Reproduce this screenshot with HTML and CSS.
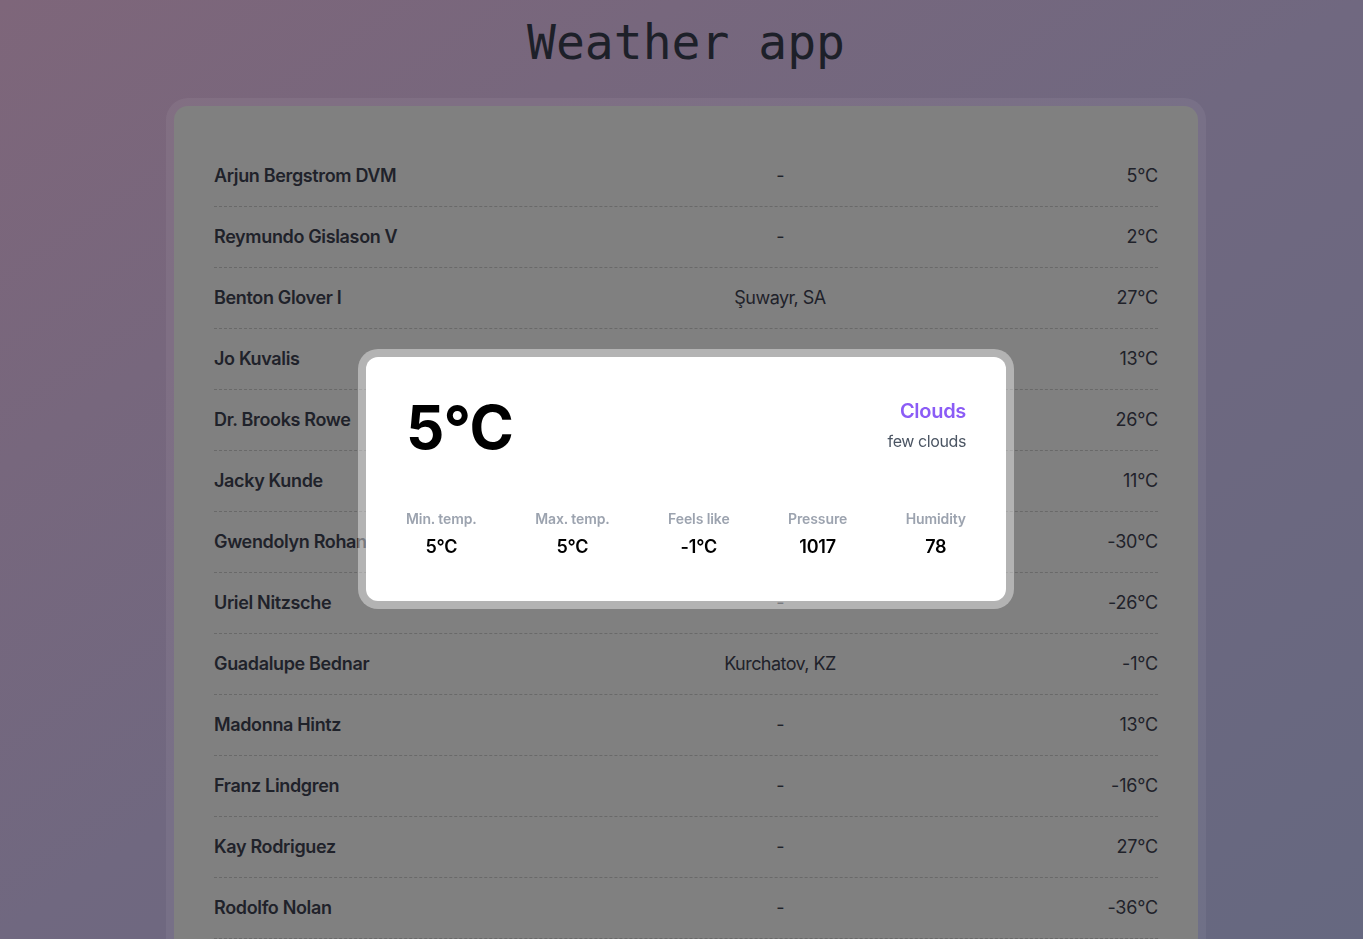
FILE: index.html
```html
<!DOCTYPE html>
<html lang="en">
<head>
<meta charset="utf-8">
<title>Weather app</title>
<link rel="stylesheet" href="styles.css">
</head>
<body>
<div class="page">
  <h1 class="title">Weather app</h1>
  <div class="card">
    <div class="row"><span class="name">Arjun Bergstrom DVM</span><span class="loc">-</span><span class="temp">5°C</span></div>
    <div class="row"><span class="name">Reymundo Gislason V</span><span class="loc">-</span><span class="temp">2°C</span></div>
    <div class="row"><span class="name">Benton Glover I</span><span class="loc">Şuwayr, SA</span><span class="temp">27°C</span></div>
    <div class="row"><span class="name">Jo Kuvalis</span><span class="loc">-</span><span class="temp">13°C</span></div>
    <div class="row"><span class="name">Dr. Brooks Rowe</span><span class="loc">-</span><span class="temp">26°C</span></div>
    <div class="row"><span class="name">Jacky Kunde</span><span class="loc">-</span><span class="temp">11°C</span></div>
    <div class="row"><span class="name">Gwendolyn Rohan</span><span class="loc">-</span><span class="temp">-30°C</span></div>
    <div class="row"><span class="name">Uriel Nitzsche</span><span class="loc">-</span><span class="temp">-26°C</span></div>
    <div class="row"><span class="name">Guadalupe Bednar</span><span class="loc">Kurchatov, KZ</span><span class="temp">-1°C</span></div>
    <div class="row"><span class="name">Madonna Hintz</span><span class="loc">-</span><span class="temp">13°C</span></div>
    <div class="row"><span class="name">Franz Lindgren</span><span class="loc">-</span><span class="temp">-16°C</span></div>
    <div class="row"><span class="name">Kay Rodriguez</span><span class="loc">-</span><span class="temp">27°C</span></div>
    <div class="row"><span class="name">Rodolfo Nolan</span><span class="loc">-</span><span class="temp">-36°C</span></div>
  </div>
</div>

<div class="modal">
  <div class="modal-head">
    <div class="big-temp">5°C</div>
    <div class="cond">
      <div class="cond-main">Clouds</div>
      <div class="cond-desc">few clouds</div>
    </div>
  </div>
  <div class="stats">
    <div class="stat"><div class="stat-label">Min. temp.</div><div class="stat-value">5°C</div></div>
    <div class="stat"><div class="stat-label">Max. temp.</div><div class="stat-value">5°C</div></div>
    <div class="stat"><div class="stat-label">Feels like</div><div class="stat-value">-1°C</div></div>
    <div class="stat"><div class="stat-label">Pressure</div><div class="stat-value">1017</div></div>
    <div class="stat"><div class="stat-label">Humidity</div><div class="stat-value">78</div></div>
  </div>
</div>
</body>
</html>
```

FILE: styles.css
```css
html, body {
  margin: 0;
  height: 100%;
  overflow: hidden;
}

body {
  background: linear-gradient(to bottom right, #7e667a 0%, #706880 50%, #666880 100%);
  font-family: Inter, "Noto Sans", sans-serif;
  color: #1f222a;
}

.page {
  padding-left: 9px;
}

.title {
  margin: 18px 0 0;
  font-family: "DejaVu Sans Mono", monospace;
  font-weight: normal;
  font-size: 48px;
  line-height: 48px;
  text-align: center;
  color: #1d2029;
}

.card {
  width: 944px;
  margin: 40px auto 0;
  padding: 40px;
  background: #808080;
  border-radius: 14px;
  box-shadow: 0 0 0 8px rgba(255, 255, 255, 0.06);
}

.row {
  display: grid;
  grid-template-columns: 466px 200px 1fr;
  align-items: center;
  height: 60px;
  border-bottom: 1px dashed rgba(0, 0, 0, 0.18);
  font-size: 18px;
  line-height: 24px;
  letter-spacing: -0.35px;
}

.name {
  font-weight: 600;
}

.loc {
  text-align: center;
  white-space: nowrap;
  letter-spacing: -0.55px;
}

.temp {
  text-align: right;
  letter-spacing: -0.2px;
}

.modal {
  position: fixed;
  top: 357px;
  left: 366px;
  width: 560px;
  padding: 40px;
  background: #ffffff;
  border-radius: 12px;
  box-shadow: 0 0 0 8px rgba(255, 255, 255, 0.4);
  color: #000;
}

.modal-head {
  display: flex;
  justify-content: space-between;
  align-items: flex-start;
}

.big-temp {
  font-size: 60px;
  line-height: 60px;
  font-weight: 700;
  letter-spacing: -0.5px;
}

.cond {
  text-align: right;
}

.cond-main {
  font-size: 20px;
  line-height: 28px;
  font-weight: 600;
  color: #8b5cf6;
  letter-spacing: -0.3px;
}

.cond-desc {
  margin-top: 4px;
  font-size: 16px;
  line-height: 24px;
  color: #4b5563;
  letter-spacing: -0.4px;
}

.stats {
  display: flex;
  justify-content: space-between;
  margin-top: 52px;
}

.stat {
  text-align: center;
}

.stat-label {
  font-size: 14px;
  line-height: 20px;
  font-weight: 600;
  color: #9ca3af;
  letter-spacing: -0.1px;
}

.stat-value {
  margin-top: 4px;
  font-size: 18px;
  line-height: 28px;
  font-weight: 600;
  letter-spacing: -0.2px;
}
```
